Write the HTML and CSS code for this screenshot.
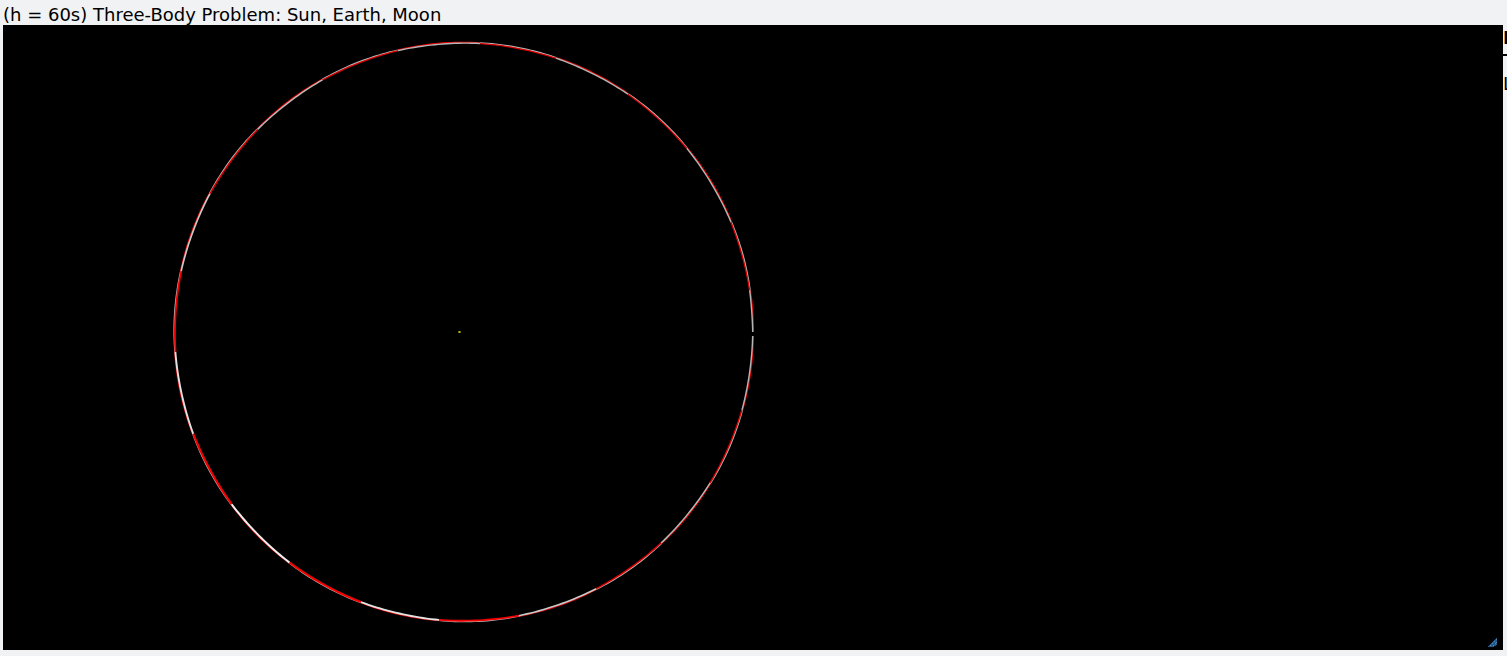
FILE: index.html
```html
<!DOCTYPE html>
<html lang="en">
<head>
<meta charset="utf-8">
<title>Three-Body Problem</title>
<link rel="stylesheet" href="styles.css">
</head>
<body>
<h1 class="title">(h = 60s) Three-Body Problem: Sun, Earth, Moon</h1>
<main class="workspace">
  <div class="scene">
    <canvas class="plot" id="plot" width="1500" height="625" role="img" aria-label="Orbits of the Earth and the Moon around the Sun"></canvas>
    <svg class="grip" viewBox="0 0 10 10" aria-hidden="true" shape-rendering="crispEdges">
      <path d="M8 0h1v1h-1zM7 1h2v1h-2zM6 2h3v1h-3zM5 3h4v1h-4zM4 4h5v1h-5zM3 5h6v1h-6zM2 6h7v1h-7zM1 7h7v1h-7zM0 8h6v1h-6z" fill="#235a8a"/>
      <path d="M8 1h1v1h-1zM6 3h1v1h-1zM8 4h1v1h-1zM4 5h1v1h-1zM7 5h1v1h-1zM5 7h1v1h-1zM2 7h1v1h-1z" fill="#4a86b4"/>
    </svg>
  </div>
  <aside class="side">
    <p class="side-head">I</p>
    <hr class="side-rule">
    <p class="side-text">L</p>
  </aside>
</main>
<script src="orbit.js"></script>
</body>
</html>
```
FILE: styles.css
```css
* {
  box-sizing: border-box;
}

body {
  margin: 0;
  padding: 0 0 6px 3px;
  background: #f0f2f4;
  color: #000;
  font-family: Verdana, "DejaVu Sans", sans-serif;
  font-size: 18px;
  overflow: hidden;
}

.title {
  margin: 0;
  padding-top: 4px;
  font-size: 18px;
  font-weight: 400;
  line-height: 21px;
}

.workspace {
  display: flex;
  align-items: flex-start;
}

.scene {
  position: relative;
  flex: 1;
  background: #000;
}

.plot {
  display: block;
  width: 100%;
}

.grip {
  position: absolute;
  right: 5px;
  bottom: 2px;
  width: 10px;
  height: 10px;
}

.side {
  width: 4px;
  overflow: hidden;
}

.side-head,
.side-text {
  margin: 0;
  line-height: 24px;
}

.side-head {
  padding-top: 1px;
  font-weight: 700;
}

.side-rule {
  height: 2px;
  margin: 4px 0 16px;
  border: 0;
  background: #000;
}
```
FILE: orbit.js
```js
const ctx = document.getElementById('plot').getContext('2d');
const cx = 460.7;
const cy = 307;
const radius = 289.2;
const steps = 20;

// Points where the Moon's path crosses the Earth's, anticlockwise from the start.
const crossings = [
  [750, 307], [747, 265], [728, 197], [684, 123], [625, 69], [553, 33],
  [477, 18], [395, 26], [319, 54], [254, 104], [206, 168], [178, 246],
  [173, 327], [190, 409], [229, 479], [287, 537], [358, 577], [436, 595],
  [516, 591], [594, 565], [658, 518], [708, 458], [739, 385], [750, 311]
];

const angles = crossings.map(([x, y]) => {
  const a = Math.atan2(y - cy, x - cx);
  return a > 0 ? a - 2 * Math.PI : a;
});
angles[0] = 0;

// Draws one stretch whose distance from the mean orbit swells and shrinks again.
function stretch(from, to, base, swell, color, width) {
  ctx.beginPath();
  for (let k = 0; k <= steps; k++) {
    const t = k / steps;
    const a = from + (to - from) * t;
    const r = radius + base + swell * Math.sin(Math.PI * t);
    ctx.lineTo(cx + r * Math.cos(a), cy + r * Math.sin(a));
  }
  ctx.strokeStyle = color;
  ctx.lineWidth = width;
  ctx.stroke();
}

for (let i = 0; i < angles.length - 1; i++) {
  const from = angles[i];
  const to = angles[i + 1];
  const weight = Math.exp(-Math.pow((i - 14) / 4, 2));
  if (i % 2 === 0) {
    const level = Math.round(180 + 60 * weight);
    stretch(from, to, 0.3, 0.15, '#e00000', 1.5);
    stretch(from, to, -0.2, -0.25, `rgb(${level}, ${level}, ${level})`, 1.4 + 0.6 * weight);
  } else {
    stretch(from, to, 0.2, 0.2, '#b8b8b8', 1.5);
    stretch(from, to, -0.3, -0.2, weight > 0.3 ? '#f40000' : '#dc0000', 1.3 + 0.9 * weight);
  }
}

// Sun
ctx.fillStyle = '#6d6d00';
ctx.fillRect(455, 306, 3, 2);
ctx.fillStyle = '#b0b018';
ctx.fillRect(456, 306, 1, 2);
```
